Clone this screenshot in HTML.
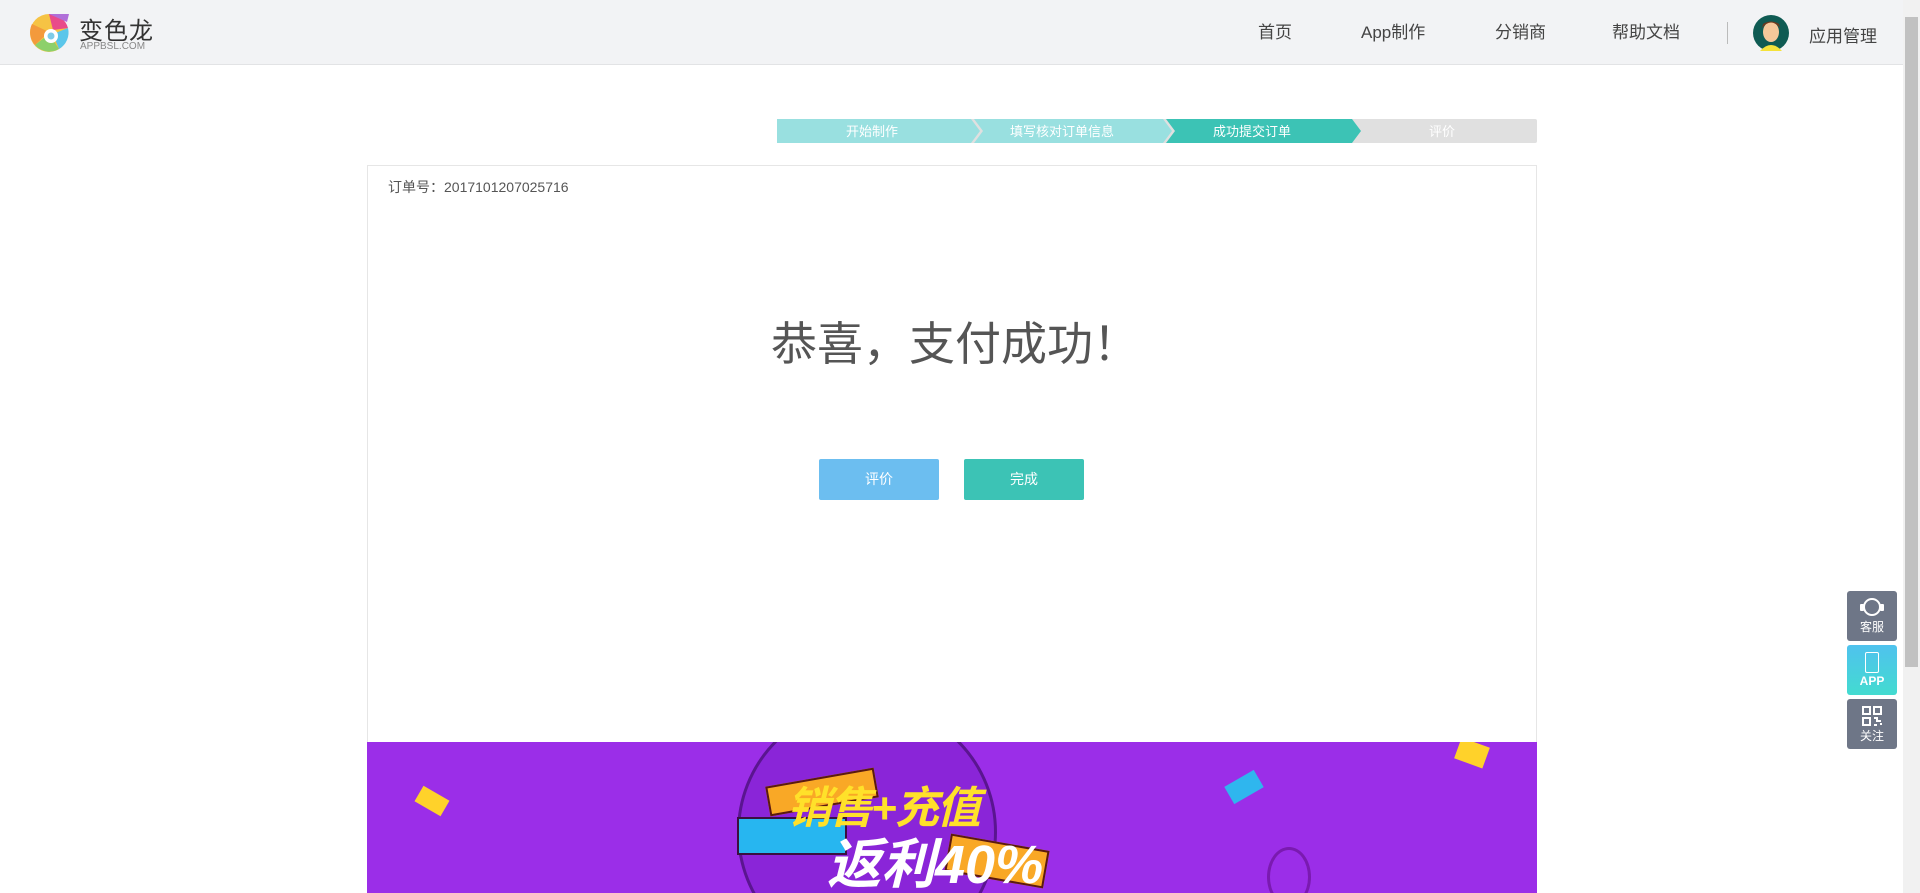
<!DOCTYPE html>
<html style="overflow:hidden"><head><meta charset="utf-8"><style>
*{margin:0;padding:0;box-sizing:border-box}
html,body{width:1920px;height:893px;overflow:hidden}
body{background:#fff;font-family:"Liberation Sans","Noto Sans CJK SC",sans-serif;position:relative}
.hdr{position:absolute;left:0;top:0;width:1903px;height:65px;background:#f2f3f5;border-bottom:1px solid #e2e3e5}
.nav{position:absolute;top:18px;font-size:17px;color:#444;white-space:nowrap}
.scroll{position:absolute;right:0;top:0;width:17px;height:893px;background:#f1f1f1}
.thumb{position:absolute;right:2px;top:17px;width:13px;height:650px;background:#c1c1c1}
.box{position:absolute;left:367px;top:165px;width:1170px;height:577px;border:1px solid #e6e6e6;border-bottom:none}
.btn{position:absolute;top:459px;width:120px;height:41px;border-radius:2px;color:#fff;font-size:14px;text-align:center;line-height:41px}
.side{position:absolute;left:1847px;width:50px;height:50px;border-radius:3px;background:#6e7687;color:#fff;font-size:12px;text-align:center}
</style></head><body>
<div class="hdr">
 <svg style="position:absolute;left:29px;top:10px" width="44" height="44" viewBox="0 0 44 44">
  <circle cx="20" cy="23" r="19" fill="#f6c344"/>
  <path d="M20 4 A19 19 0 0 1 39 18 L24 20Z" fill="#e94b8a"/>
  <path d="M39 18 A19 19 0 0 1 30 39 L24 24Z" fill="#5bc6ea"/>
  <path d="M30 39 A19 19 0 0 1 6 35 L20 24Z" fill="#8dd06a"/>
  <path d="M6 35 A19 19 0 0 1 3 14 L20 22Z" fill="#f39a3c"/>
  <path d="M20 4 L40 4 L38 12 Z" fill="#b06fd8"/>
  <circle cx="22" cy="26" r="7" fill="#fff"/><circle cx="22" cy="26" r="3.5" fill="#7ecbe8"/>
 </svg>
 <div style="position:absolute;left:79px;top:11px;font-size:24px;color:#333;letter-spacing:1px">变色龙</div>
 <div style="position:absolute;left:80px;top:41px;font-size:10px;color:#888">APPBSL.COM</div>
 <div class="nav" style="left:1258px">首页</div>
 <div class="nav" style="left:1361px">App制作</div>
 <div class="nav" style="left:1495px">分销商</div>
 <div class="nav" style="left:1612px">帮助文档</div>
 <div style="position:absolute;left:1727px;top:22px;width:1px;height:22px;background:#bbb"></div>
 <svg style="position:absolute;left:1753px;top:15px" width="36" height="36" viewBox="0 0 36 36">
  <ellipse cx="18" cy="18" rx="18" ry="18" fill="#0f5b53"/>
  <path d="M7 36 Q18 24 29 36Z" fill="#f5e23a"/>
  <ellipse cx="18" cy="17" rx="8" ry="10" fill="#f5c89a"/>
  <path d="M9 13 Q18 2 27 13 L26 9 Q18 4 10 9Z" fill="#6b3a1e"/>
 </svg>
 <div class="nav" style="left:1809px;top:22px">应用管理</div>
</div>
<div class="scroll"><div class="thumb"></div></div>
<svg style="position:absolute;left:777px;top:119px" width="760" height="24" viewBox="0 0 760 24">
 <rect x="0" y="0" width="760" height="24" rx="2" fill="#e0e0e0"/>
 <path d="M0 0 H194 L203 12 L194 24 H0Z" fill="#99e0e0"/>
 <path d="M197 0 H386 L395 12 L386 24 H197 L206 12Z" fill="#99e0e0"/>
 <path d="M389 0 H575 L584 12 L575 24 H389 L398 12Z" fill="#3cc3b5"/>
 <g font-size="13" fill="#fff" text-anchor="middle" font-family="Liberation Sans,Noto Sans CJK SC,sans-serif">
 <text x="95" y="17">开始制作</text><text x="285" y="17">填写核对订单信息</text><text x="475" y="17">成功提交订单</text><text x="665" y="17">评价</text></g>
</svg>
<div class="box">
 <div style="position:absolute;left:20px;top:11px;font-size:14px;color:#555">订单号：2017101207025716</div>
 <div style="position:absolute;left:0;width:100%;top:142px;text-align:center;font-size:46px;color:#555;padding-left:6px">恭喜，支付成功！</div>
</div>
<div class="btn" style="left:819px;background:#6cbef0">评价</div>
<div class="btn" style="left:964px;background:#3cc3b5">完成</div>
<div style="position:absolute;left:367px;top:742px;width:1170px;height:151px;background:#9b2ee8;overflow:hidden">
 <div style="position:absolute;left:370px;top:-40px;width:260px;height:260px;border-radius:50%;background:#8a25d8;border:3px solid #5a1590"></div>
 <div style="position:absolute;left:400px;top:35px;width:110px;height:30px;background:#f9a826;transform:rotate(-10deg);border:2px solid #5a1a10"></div>
 <div style="position:absolute;left:370px;top:75px;width:110px;height:38px;background:#27b6f0;border:2px solid #3a1040"></div>
 <div style="position:absolute;left:580px;top:100px;width:100px;height:38px;background:#f9a826;transform:rotate(10deg);border:2px solid #5a1a10"></div>
 <div style="position:absolute;left:420px;top:30px;font-size:44px;font-weight:bold;color:#ffe12a;letter-spacing:-2px;font-style:italic">销售+充值</div>
 <div style="position:absolute;left:460px;top:78px;font-size:54px;font-weight:bold;color:#fff;font-style:italic">返利40%</div>
 <div style="position:absolute;left:50px;top:50px;width:30px;height:18px;background:#ffd22a;transform:rotate(30deg)"></div>
 <div style="position:absolute;left:860px;top:35px;width:34px;height:20px;background:#2fb6ee;transform:rotate(-30deg)"></div>
 <div style="position:absolute;left:1090px;top:0;width:30px;height:22px;background:#ffd22a;transform:rotate(20deg)"></div>
 <div style="position:absolute;left:900px;top:105px;width:44px;height:60px;border-radius:50%;border:3px solid #7a1ab0"></div>
</div>
<div class="side" style="top:591px"><svg style="display:block;margin:6px auto 0" width="26" height="20" viewBox="0 0 26 20"><circle cx="13" cy="10" r="8" fill="none" stroke="#fff" stroke-width="2"/><rect x="1" y="7" width="4" height="7" rx="1" fill="#fff"/><rect x="21" y="7" width="4" height="7" rx="1" fill="#fff"/></svg><div style="margin-top:1px">客服</div></div>
<div class="side" style="top:645px;background:linear-gradient(#4fc2ee,#43dbd0)"><div style="margin:7px auto 0;width:14px;height:21px;border:1.5px solid #fff;border-radius:2px"></div><div style="margin-top:1px;font-weight:bold">APP</div></div>
<div class="side" style="top:699px"><svg style="display:block;margin:7px auto 0" width="20" height="20" viewBox="0 0 20 20" fill="none" stroke="#fff" stroke-width="2"><rect x="1" y="1" width="7" height="7"/><rect x="12" y="1" width="7" height="7"/><rect x="1" y="12" width="7" height="7"/><path d="M12 12h3v3h4M12 19h3M19 17v2"/></svg><div style="margin-top:1px">关注</div></div>
</body></html>
